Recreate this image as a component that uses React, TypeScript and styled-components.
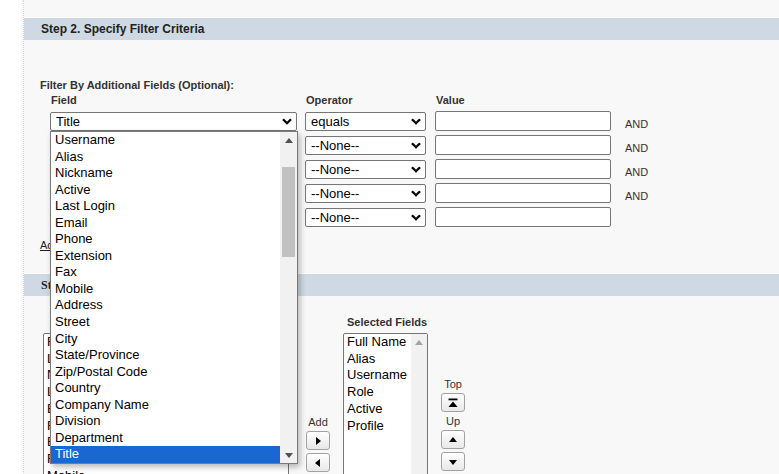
import React from 'react'
import styled, { createGlobalStyle } from 'styled-components'

const GlobalStyle = createGlobalStyle`
  html, body {
    margin: 0;
    padding: 0;
    background: #fff;
  }
  body {
    font-family: "Liberation Sans", Arial, sans-serif;
    color: #000;
  }
`

const operators = ['equals', '--None--', '--None--', '--None--', '--None--']

const fieldOptions = [
  'Username', 'Alias', 'Nickname', 'Active', 'Last Login', 'Email', 'Phone',
  'Extension', 'Fax', 'Mobile', 'Address', 'Street', 'City', 'State/Province',
  'Zip/Postal Code', 'Country', 'Company Name', 'Division', 'Department', 'Title',
]

const availableFields = [
  'First Name', 'Last Name', 'Nickname', 'Last Login', 'Email', 'Fax',
  'Extension', 'Fax', 'Mobile', 'Phone',
]

const selectedFields = ['Full Name', 'Alias', 'Username', 'Role', 'Active', 'Profile']

const Chevron: React.FC = () => (
  <svg width="10" height="7" viewBox="0 0 10 7">
    <polyline points="1,1.2 5,5.2 9,1.2" fill="none" stroke="#000" strokeWidth="2.3" />
  </svg>
)

const Tri: React.FC<{ dir: 'up' | 'down' | 'left' | 'right'; color?: string; top?: boolean }> = ({ dir, color = '#000', top }) => {
  const pts = {
    up: '1,7 5,2 9,7',
    down: '1,3 5,8 9,3',
    left: '7,1 2,5 7,9',
    right: '3,1 8,5 3,9',
  }[dir]
  return (
    <svg width="10" height="10" viewBox="0 0 10 10">
      {top && <rect x="0.5" y="0.5" width="9" height="1.8" fill={color} />}
      <polygon points={top ? '0.5,9 5,3.5 9.5,9' : pts} fill={color} />
    </svg>
  )
}

const App: React.FC = () => {
  return (
    <>
      <GlobalStyle />
      <Page>
        <Gutter />
        <Panel>
          <SectionHeader>Step 2. Specify Filter Criteria</SectionHeader>

          <FilterBlock>
            <BlockLabel>Filter By Additional Fields (Optional):</BlockLabel>
            <FilterGrid>
              <ColLabel>Field</ColLabel>
              <ColLabel>Operator</ColLabel>
              <ColLabel>Value</ColLabel>
              <span />
              {operators.map((op, i) => (
                <React.Fragment key={i}>
                  <FakeSelect width={247}>
                    <span>{i === 0 ? 'Title' : '--None--'}</span>
                    <Chevron />
                  </FakeSelect>
                  <FakeSelect width={121}>
                    <span>{op}</span>
                    <Chevron />
                  </FakeSelect>
                  <ValueInput />
                  <AndLabel>{i < 4 ? 'AND' : ''}</AndLabel>
                </React.Fragment>
              ))}
            </FilterGrid>
            <LogicLink>Add Filter Logic...</LogicLink>
          </FilterBlock>

          <SectionHeader serif>Step 3. Select the Columns to Display</SectionHeader>

          <ColumnPicker>
            <PickerCol>
              <BlockLabel indent={8}>Available Fields</BlockLabel>
              <ListBox width={246}>
                {availableFields.map((f, i) => (
                  <ListItem key={i}>{f}</ListItem>
                ))}
              </ListBox>
            </PickerCol>

            <ButtonCol offset={100}>
              <SmallLabel>Add</SmallLabel>
              <ArrowButton><Tri dir="right" /></ArrowButton>
              <ArrowButton><Tri dir="left" /></ArrowButton>
            </ButtonCol>

            <PickerCol>
              <BlockLabel indent={4}>Selected Fields</BlockLabel>
              <ListBox width={85}>
                <ListItems>
                  {selectedFields.map((f) => (
                    <ListItem key={f}>{f}</ListItem>
                  ))}
                </ListItems>
                <MiniScroll>
                  <Tri dir="up" color="#a3a3a3" />
                </MiniScroll>
              </ListBox>
            </PickerCol>

            <ButtonCol offset={62}>
              <SmallLabel>Top</SmallLabel>
              <ArrowButton><Tri dir="up" top /></ArrowButton>
              <SmallLabel>Up</SmallLabel>
              <ArrowButton><Tri dir="up" /></ArrowButton>
              <ArrowButton><Tri dir="down" /></ArrowButton>
            </ButtonCol>
          </ColumnPicker>

          {/* open native-style dropdown of the first Field select */}
          <DropList>
            <DropItems>
              {fieldOptions.map((f) => (
                <DropItem key={f} active={f === 'Title'}>{f}</DropItem>
              ))}
            </DropItems>
            <DropScroll>
              <ScrollArrow><Tri dir="up" color="#505050" /></ScrollArrow>
              <ScrollTrack>
                <ScrollThumb />
              </ScrollTrack>
              <ScrollArrow><Tri dir="down" color="#505050" /></ScrollArrow>
            </DropScroll>
          </DropList>
        </Panel>
      </Page>
    </>
  )
}

const Page = styled.div`
  display: flex;
  height: 474px;
  overflow: hidden;
`

const Gutter = styled.div`
  width: 23px;
  flex: none;
  background: #fff;
  border-right: 1px dotted #d8d8d8;
`

const Panel = styled.div`
  flex: 1;
  position: relative;
  background: #f8f8f8;
  padding-top: 17px;
`

const SectionHeader = styled.div<{ serif?: boolean }>`
  height: 23px;
  box-sizing: border-box;
  border-top: 1px solid #fff;
  background: #cfd9e3;
  display: flex;
  align-items: center;
  padding-left: 17px;
  font-size: 12px;
  font-weight: bold;
  color: #222;
  font-family: ${(p) => (p.serif ? '"Liberation Serif", "Times New Roman", serif' : 'inherit')};
`

const FilterBlock = styled.div`
  padding: 39px 0 0 16px;
  height: 233px;
  box-sizing: border-box;
`

const BlockLabel = styled.div<{ indent?: number }>`
  font-size: 11px;
  line-height: 13px;
  font-weight: bold;
  color: #333;
  white-space: nowrap;
  padding-left: ${(p) => p.indent ?? 0}px;
`

const SmallLabel = styled.div`
  font-size: 11px;
  line-height: 13px;
  color: #333;
  text-align: center;
  margin-bottom: 2px;
`

const FilterGrid = styled.div`
  display: grid;
  grid-template-columns: 255px 130px 190px auto;
  grid-template-rows: 13px;
  grid-auto-rows: 19px;
  row-gap: 5px;
  margin: 2px 0 0 10px;
`

const ColLabel = styled.div`
  font-size: 11px;
  line-height: 13px;
  font-weight: bold;
  color: #333;
  padding-left: 1px;
`

const FakeSelect = styled.div<{ width: number }>`
  width: ${(p) => p.width}px;
  height: 19px;
  box-sizing: border-box;
  border: 1px solid #767676;
  border-radius: 2px;
  background: #fff;
  display: flex;
  align-items: center;
  justify-content: space-between;
  padding: 0 4px 0 5px;
  font-size: 13px;
  color: #000;
`

const ValueInput = styled.input`
  width: 176px;
  height: 20px;
  margin-top: -1px;
  box-sizing: border-box;
  border: 1px solid #767676;
  border-radius: 2px;
  background: #fff;
  padding: 0;
`

const AndLabel = styled.div`
  font-size: 11px;
  line-height: 13px;
  color: #333;
  padding-top: 6px;
`

const LogicLink = styled.a`
  display: inline-block;
  margin-top: 12px;
  font-size: 11px;
  line-height: 13px;
  color: #222;
  text-decoration: underline;
`

const ColumnPicker = styled.div`
  display: flex;
  align-items: flex-start;
  padding: 20px 0 0 19px;
  gap: 13px;
`

const PickerCol = styled.div`
  display: flex;
  flex-direction: column;
  gap: 4px;
  &:first-child {
    margin-right: 4px;
  }
`

const ListBox = styled.div<{ width: number }>`
  width: ${(p) => p.width}px;
  height: 200px;
  box-sizing: border-box;
  border: 1px solid #767676;
  border-radius: 2px;
  background: #fff;
  display: flex;
  flex-direction: column;
  overflow: hidden;
  padding-left: 3px;
  &:has(> ul) {
    flex-direction: row;
  }
`

const ListItems = styled.ul`
  list-style: none;
  margin: 0;
  padding: 0;
  flex: 1;
  min-width: 0;
`

const ListItem = styled.li`
  list-style: none;
  font-size: 13px;
  line-height: 16.7px;
  color: #000;
  white-space: nowrap;
`

const MiniScroll = styled.div`
  width: 16px;
  flex: none;
  background: #f1f1f1;
  display: flex;
  justify-content: center;
  padding-top: 4px;
`

const ButtonCol = styled.div<{ offset: number }>`
  display: flex;
  flex-direction: column;
  align-items: center;
  width: 24px;
  margin-top: ${(p) => p.offset}px;
`

const ArrowButton = styled.button`
  width: 24px;
  height: 19px;
  box-sizing: border-box;
  border: 1px solid #a2a2a2;
  border-radius: 3px;
  background: linear-gradient(#ffffff, #e8e8e8);
  padding: 0;
  display: flex;
  align-items: center;
  justify-content: center;
  margin-bottom: 3px;
`

const DropList = styled.div`
  position: absolute;
  left: 26px;
  top: 131px;
  width: 248px;
  height: 333px;
  box-sizing: border-box;
  border: 1px solid #7a7a7a;
  background: #fff;
  display: flex;
  box-shadow: 2px 3px 6px rgba(0, 0, 0, 0.28);
  z-index: 5;
`

const DropItems = styled.div`
  flex: 1;
  display: flex;
  flex-direction: column;
`

const DropItem = styled.div<{ active?: boolean }>`
  height: 16.55px;
  line-height: 16.55px;
  font-size: 13px;
  padding-left: 4px;
  color: ${(p) => (p.active ? '#fff' : '#000')};
  background: ${(p) => (p.active ? '#1967d2' : 'transparent')};
`

const DropScroll = styled.div`
  width: 17px;
  flex: none;
  background: #f1f1f1;
  display: flex;
  flex-direction: column;
`

const ScrollArrow = styled.div`
  height: 17px;
  display: flex;
  align-items: center;
  justify-content: center;
`

const ScrollTrack = styled.div`
  flex: 1;
  padding: 18px 2px 0;
`

const ScrollThumb = styled.div`
  height: 90px;
  background: #c1c1c1;
`

export default App
